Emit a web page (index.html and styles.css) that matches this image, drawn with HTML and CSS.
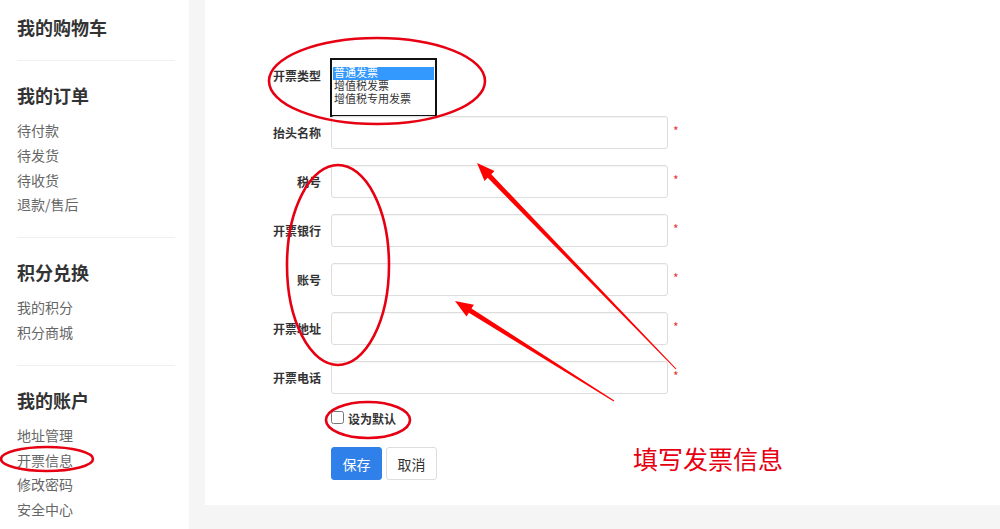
FILE: index.html
```html
<!DOCTYPE html>
<html lang="zh-CN">
<head>
<meta charset="UTF-8">
<meta name="viewport" content="width=device-width, initial-scale=1.0">
<title>开票信息</title>
<link rel="stylesheet" href="styles.css">
</head>
<body>
    <div class="sidebar">
        <div class="side-group">
            <h3>我的购物车</h3>
        </div>
        <div class="side-group">
            <h3>我的订单</h3>
            <ul>
                <li>待付款</li>
                <li>待发货</li>
                <li>待收货</li>
                <li>退款/售后</li>
            </ul>
        </div>
        <div class="side-group">
            <h3>积分兑换</h3>
            <ul>
                <li>我的积分</li>
                <li>积分商城</li>
            </ul>
        </div>
        <div class="side-group last">
            <h3>我的账户</h3>
            <ul>
                <li>地址管理</li>
                <li>开票信息</li>
                <li>修改密码</li>
                <li>安全中心</li>
            </ul>
        </div>
    </div>

    <div class="main">
        <form class="invoice-form">
            <div class="row row-type">
                <label>开票类型</label>
                <div class="listbox">
                    <div class="opt selected">普通发票</div>
                    <div class="opt">增值税发票</div>
                    <div class="opt">增值税专用发票</div>
                </div>
            </div>
            <div class="row">
                <label>抬头名称</label>
                <input type="text" class="field">
                <span class="star">*</span>
            </div>
            <div class="row">
                <label>税号</label>
                <input type="text" class="field">
                <span class="star">*</span>
            </div>
            <div class="row">
                <label>开票银行</label>
                <input type="text" class="field">
                <span class="star">*</span>
            </div>
            <div class="row">
                <label>账号</label>
                <input type="text" class="field">
                <span class="star">*</span>
            </div>
            <div class="row">
                <label>开票地址</label>
                <input type="text" class="field">
                <span class="star">*</span>
            </div>
            <div class="row">
                <label>开票电话</label>
                <input type="text" class="field">
                <span class="star">*</span>
            </div>
            <div class="check-row">
                <input type="checkbox" id="def">
                <label for="def">设为默认</label>
            </div>
            <div class="btn-row">
                <button type="button" class="btn-save">保存</button>
                <button type="reset" class="btn-cancel">取消</button>
            </div>
        </form>
    </div>

    <!-- annotations drawn on top of the screenshot -->
    <svg class="marks" width="1000" height="529" viewBox="0 0 1000 529">
        <ellipse cx="377" cy="81" rx="108" ry="43" />
        <ellipse cx="338" cy="265" rx="51" ry="100" />
        <ellipse cx="47" cy="459" rx="46" ry="12" />
        <ellipse cx="368" cy="420" rx="42" ry="18" />
        <polygon class="arrow" points="477,163 494.5,171.1 491.3,174.3 676.4,368.7 675.6,369.3 487.7,177.7 484.5,180.9" />
        <polygon class="arrow" points="455,301 473.9,304.7 471.5,308.5 614.3,400.6 613.7,401.4 468.9,312.7 466.5,316.5" />
    </svg>
    <div class="note">填写发票信息</div>
</body>
</html>
```

FILE: styles.css
```css
html, body {
    margin: 0;
    padding: 0;
    height: 529px;
    overflow: hidden;
}
body {
    font-family: "Noto Sans CJK SC", "Noto Sans", sans-serif;
    background-color: #f5f5f5;
    display: flex;
    align-items: flex-start;
    gap: 16px;
    position: relative;
}

/* left menu */
.sidebar {
    width: 189px;
    height: 529px;
    background-color: #fff;
    box-sizing: border-box;
    padding: 0 14px 0 17px;
    flex-shrink: 0;
}
.side-group {
    padding: 22px 0 20px;
    border-bottom: 1px solid #f0f0f0;
}
.side-group:first-child {
    padding-top: 15px;
    padding-bottom: 21px;
}
.side-group.last {
    border-bottom: none;
}
.side-group h3 {
    margin: 0;
    font-size: 18px;
    line-height: 24px;
    font-weight: bold;
    color: #333;
}
.side-group ul {
    list-style: none;
    margin: 11px 0 0;
    padding: 0;
}
.side-group li {
    font-size: 14px;
    line-height: 24.8px;
    color: #666;
}

/* main panel */
.main {
    flex: 1;
    height: 505px;
    background-color: #fff;
    box-sizing: border-box;
    padding: 58px 0 0 40px;
}
.row {
    display: flex;
    align-items: center;
    margin-bottom: 16px;
}
.row label {
    width: 76px;
    margin-right: 10px;
    text-align: right;
    font-size: 12px;
    font-weight: bold;
    color: #333;
}
.row-type {
    align-items: flex-start;
    margin-bottom: -1px;
}
.row-type label {
    padding-top: 9px;
    margin-right: 9px;
}
.listbox {
    width: 107px;
    height: 59px;
    box-sizing: border-box;
    border: 2px solid #111;
    padding: 7px 1px 0;
    background: #fff;
}
.opt {
    font-family: "Liberation Sans", "Noto Sans CJK SC", sans-serif;
    font-size: 11px;
    line-height: 13px;
    height: 13px;
    padding-left: 1px;
    color: #333;
    white-space: nowrap;
    overflow: hidden;
}
.opt.selected {
    background-color: #3399ff;
    color: #fff;
}
.field {
    width: 337px;
    height: 33px;
    box-sizing: border-box;
    border: 1px solid #ddd;
    border-radius: 3px;
    box-shadow: inset 0 1px 1px rgba(0, 0, 0, 0.04);
    margin: 0;
    padding: 0 8px;
    font-size: 14px;
}
.star {
    color: #e53935;
    font-size: 12px;
    margin-left: 5px;
    margin-top: -4px;
}
.check-row {
    display: flex;
    align-items: center;
    padding-left: 86px;
    margin-top: 4px;
    height: 14px;
}
.check-row input {
    margin: 0 4px 0 0;
    width: 13px;
    height: 13px;
}
.check-row label {
    font-size: 12px;
    font-weight: bold;
    color: #333;
    margin-top: 2px;
}
.btn-row {
    display: flex;
    gap: 4px;
    padding-left: 86px;
    margin-top: 23px;
}
.btn-row button {
    height: 33px;
    width: 51px;
    padding: 0;
    border-radius: 3px;
    font-family: inherit;
    font-size: 14px;
    cursor: pointer;
}
.btn-save {
    background-color: #2f80e8;
    border: 1px solid #2f80e8;
    color: #fff;
}
.btn-cancel {
    background-color: #fff;
    border: 1px solid #ddd;
    color: #333;
}

/* annotation layer */
.marks {
    position: absolute;
    left: 0;
    top: 0;
    pointer-events: none;
}
.marks ellipse {
    fill: none;
    stroke: #e60012;
    stroke-width: 2.6;
}
.marks .arrow {
    fill: #f00;
}
.note {
    position: absolute;
    left: 633px;
    top: 443px;
    font-size: 25px;
    line-height: 30px;
    color: #e60012;
    white-space: nowrap;
}
```
